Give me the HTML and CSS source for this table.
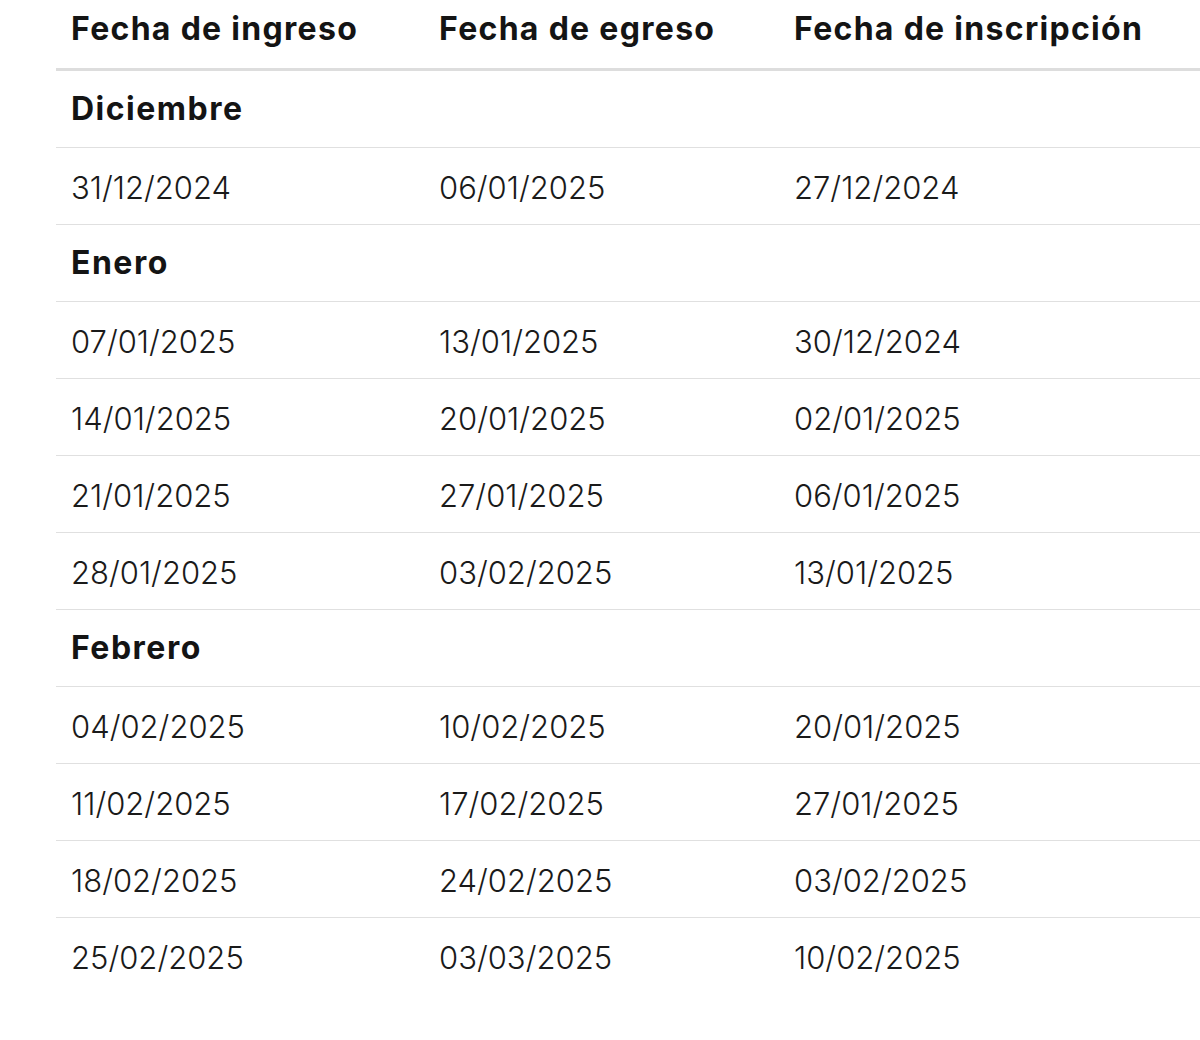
FILE: index.html
```html
<!DOCTYPE html>
<html lang="es">
<head>
<meta charset="utf-8">
<title>Fechas</title>
<link rel="stylesheet" href="styles.css">
</head>
<body>
<table class="fechas">
  <colgroup>
    <col class="c1"><col class="c2"><col class="c3">
  </colgroup>
  <thead>
    <tr><th>Fecha de ingreso</th><th>Fecha de egreso</th><th>Fecha de inscripción</th></tr>
  </thead>
  <tbody>
    <tr class="mes"><td colspan="3">Diciembre</td></tr>
    <tr><td>31/12/2024</td><td>06/01/2025</td><td>27/12/2024</td></tr>
    <tr class="mes"><td colspan="3">Enero</td></tr>
    <tr><td>07/01/2025</td><td>13/01/2025</td><td>30/12/2024</td></tr>
    <tr><td>14/01/2025</td><td>20/01/2025</td><td>02/01/2025</td></tr>
    <tr><td>21/01/2025</td><td>27/01/2025</td><td>06/01/2025</td></tr>
    <tr><td>28/01/2025</td><td>03/02/2025</td><td>13/01/2025</td></tr>
    <tr class="mes"><td colspan="3">Febrero</td></tr>
    <tr><td>04/02/2025</td><td>10/02/2025</td><td>20/01/2025</td></tr>
    <tr><td>11/02/2025</td><td>17/02/2025</td><td>27/01/2025</td></tr>
    <tr><td>18/02/2025</td><td>24/02/2025</td><td>03/02/2025</td></tr>
    <tr class="last"><td>25/02/2025</td><td>03/03/2025</td><td>10/02/2025</td></tr>
  </tbody>
</table>
</body>
</html>
```
FILE: styles.css
```css
html, body {
  margin: 0;
  padding: 0;
  background: #ffffff;
}
body {
  font-family: Inter, "Liberation Sans", sans-serif;
  color: #1a1a1a;
}
.fechas {
  margin-left: 56px;
  width: 1160px;
  border-collapse: collapse;
  table-layout: fixed;
}
.c1 { width: 368px; }
.c2 { width: 355px; }
.c3 { width: 437px; }
.fechas th {
  text-align: left;
  font-weight: 700;
  font-size: 32px;
  letter-spacing: 1.3px;
  height: 58px;
  padding: 0 0 10px 15px;
  vertical-align: middle;
  border-bottom: 3px solid #dddddd;
  line-height: 1;
  color: #141414;
}
.fechas td {
  height: 73px;
  padding: 3px 0 0 15px;
  font-size: 31px;
  font-weight: 300;
  line-height: 1;
  vertical-align: middle;
  border-bottom: 1px solid #e0e0e0;
}
.fechas tr.mes td {
  font-weight: 700;
  font-size: 32px;
  letter-spacing: 1.5px;
  height: 76px;
  padding-top: 0;
  color: #141414;
}
.fechas tr.last td {
  border-bottom: none;
}
```
